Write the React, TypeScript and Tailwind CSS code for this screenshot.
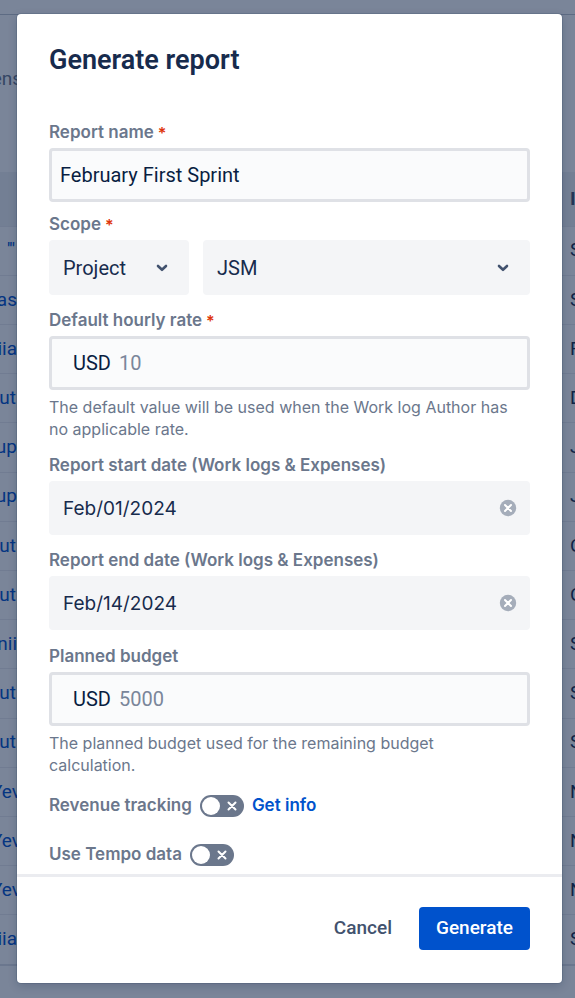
import { useState } from "react";
import type { ReactNode } from "react";

const ROWS = [
  { user: "'''", status: "Started", width: "w-[15px]" },
  { user: "as", status: "Started", width: "w-[17px]" },
  { user: "iia", status: "Finished", width: "w-[17px]" },
  { user: "ut", status: "Done", width: "w-4" },
  { user: "up", status: "Joined", width: "w-[17px]" },
  { user: "up", status: "Joined", width: "w-[17px]" },
  { user: "ut", status: "Open", width: "w-4" },
  { user: "ut", status: "Open", width: "w-4" },
  { user: "nii", status: "Started", width: "w-[17px]" },
  { user: "ut", status: "Started", width: "w-4" },
  { user: "ut", status: "Started", width: "w-4" },
  { user: "Yev", status: "New", width: "w-[21px]" },
  { user: "Yev", status: "New", width: "w-[21px]" },
  { user: "Yev", status: "New", width: "w-[21px]" },
  { user: "iia", status: "Started", width: "w-[17px]" },
];

function PageBehind() {
  return (
    <div aria-hidden="true" className="h-full overflow-hidden bg-white text-[19px] text-[#172b4d]">
      <div className="h-[15px] border-b border-[#c1c7d0]" />
      <div className="flex h-[157px] w-[22px] justify-end pt-[50px] leading-7 text-[#6b778c]">ens</div>
      <table className="h-[794px] w-full table-fixed border-collapse border-b-2 border-[#dfe1e6]">
        <thead>
          <tr className="h-[54px] bg-[#f0f2f5]">
            <th className="w-[570px]" />
            <th className="text-left text-[#42526e]">ID</th>
          </tr>
        </thead>
        <tbody>
          {ROWS.map((row, i) => (
            <tr key={i} className="border-t border-[#ebecf0]">
              <td className="p-0">
                <div className={`flex justify-end text-[#0052cc] ${row.width}`}>{row.user}</div>
              </td>
              <td className="overflow-hidden p-0">{row.status}</td>
            </tr>
          ))}
        </tbody>
      </table>
    </div>
  );
}

interface FieldProps {
  id: string;
  label: string;
  required?: boolean;
  help?: string;
  className?: string;
  children: ReactNode;
}

function Field({ id, label, required, help, className = "mt-[15px]", children }: FieldProps) {
  return (
    <div className={className}>
      <label
        htmlFor={id}
        className="mb-1 flex h-[22px] items-center gap-1 font-[Inter,sans-serif] text-[17px] font-semibold text-[#6b778c]"
      >
        {label}
        {required && <span className="text-[16px] text-[#de350b]">*</span>}
      </label>
      {children}
      {help && (
        <p className="mt-1.5 pr-3 font-[Inter,sans-serif] text-[16px] leading-[22px] text-[#6b778c]">{help}</p>
      )}
    </div>
  );
}

function MoneyInput({ id, placeholder }: { id: string; placeholder: string }) {
  return (
    <div className="flex h-[54px] items-center gap-2 rounded border-[3px] border-[#dfe1e6] bg-[#fafbfc] pl-[21px] text-[20px] text-[#091e42]">
      <span>USD</span>
      <input
        id={id}
        type="text"
        inputMode="decimal"
        placeholder={placeholder}
        className="h-full min-w-0 flex-1 bg-transparent outline-none placeholder:text-[#7a869a]"
      />
    </div>
  );
}

function SelectBox({ id, label, options, className }: {
  id: string;
  label?: string;
  options: string[];
  className: string;
}) {
  return (
    <div className={`relative ${className}`}>
      <select
        id={id}
        aria-label={label}
        className="h-[55px] w-full appearance-none rounded bg-[#f4f5f7] pl-3.5 text-[20px] text-[#172b4d] outline-none"
      >
        {options.map((o) => (
          <option key={o}>{o}</option>
        ))}
      </select>
      <svg
        viewBox="0 0 12 8"
        className="pointer-events-none absolute top-6 right-[21px] h-2 w-3"
        fill="none"
        stroke="#42526e"
        strokeWidth="2.6"
        strokeLinecap="round"
        strokeLinejoin="round"
      >
        <path d="M2 2l4 3.8L10 2" />
      </svg>
    </div>
  );
}

function DateInput({ id, initial }: { id: string; initial: string }) {
  const [value, setValue] = useState(initial);

  return (
    <div className="flex h-[54px] items-center rounded bg-[#f4f5f7] pr-[13px] pl-3.5 font-[Inter,sans-serif] text-[19px] text-[#172b4d]">
      <input
        id={id}
        type="text"
        value={value}
        onChange={(e) => setValue(e.target.value)}
        className="h-full min-w-0 flex-1 bg-transparent outline-none"
      />
      <button type="button" aria-label="Clear" onClick={() => setValue("")}>
        <svg viewBox="0 0 18 18" className="h-[18px] w-[18px]">
          <circle cx="9" cy="9" r="8.2" fill="#a5adba" />
          <path d="M6 6l6 6M12 6l-6 6" stroke="#fff" strokeWidth="2" strokeLinecap="round" />
        </svg>
      </button>
    </div>
  );
}

function Toggle({ id }: { id: string }) {
  return (
    <span className="relative flex">
      <input
        id={id}
        type="checkbox"
        role="switch"
        className="peer h-[22px] w-11 appearance-none rounded-full bg-[#6b778c] checked:bg-[#00875a]"
      />
      <span className="pointer-events-none absolute top-[2px] left-[2px] h-[18px] w-[18px] rounded-full bg-white peer-checked:left-6" />
      <svg
        viewBox="0 0 10 10"
        className="pointer-events-none absolute top-1.5 right-[7px] h-2.5 w-2.5 peer-checked:hidden"
        stroke="#fff"
        strokeWidth="2"
        strokeLinecap="round"
      >
        <path d="M1.5 1.5l7 7M8.5 1.5l-7 7" />
      </svg>
    </span>
  );
}

export default function App() {
  const [name, setName] = useState("February First Sprint");

  return (
    <div className="relative h-screen overflow-hidden font-[Roboto,sans-serif]">
      <PageBehind />
      <div className="absolute inset-0 flex bg-[#091e42]/54 pt-3.5 pr-[13px] pb-[15px] pl-[17px]">
        <div
          role="dialog"
          aria-modal="true"
          aria-labelledby="title"
          className="flex min-w-0 flex-1 flex-col rounded bg-white shadow-[0_0_0_1px_rgba(9,30,66,0.12),0_3px_10px_rgba(9,30,66,0.2)]"
        >
          <h1 id="title" className="px-8 pt-7 text-[27px] leading-9 font-semibold text-[#172b4d]">
            Generate report
          </h1>

          <form className="min-h-0 flex-1 overflow-hidden px-8 pt-11">
            <Field id="name" label="Report name" required className="">
              <input
                id="name"
                type="text"
                value={name}
                onChange={(e) => setName(e.target.value)}
                className="block h-[54px] w-full rounded border-[3px] border-[#dfe1e6] bg-[#fafbfc] px-2 text-[20px] text-[#091e42] outline-none"
              />
            </Field>

            <Field id="scope" label="Scope" required className="mt-3">
              <div className="flex gap-3.5">
                <SelectBox id="scope" options={["Project", "Filter"]} className="w-[140px]" />
                <SelectBox id="project" label="Project" options={["JSM"]} className="flex-1" />
              </div>
            </Field>

            <Field
              id="rate"
              label="Default hourly rate"
              required
              help="The default value will be used when the Work log Author has no applicable rate."
            >
              <MoneyInput id="rate" placeholder="10" />
            </Field>

            <Field id="start" label="Report start date (Work logs & Expenses)">
              <DateInput id="start" initial="Feb/01/2024" />
            </Field>

            <Field id="end" label="Report end date (Work logs & Expenses)">
              <DateInput id="end" initial="Feb/14/2024" />
            </Field>

            <Field
              id="budget"
              label="Planned budget"
              className="mt-4"
              help="The planned budget used for the remaining budget calculation."
            >
              <MoneyInput id="budget" placeholder="5000" />
            </Field>

            <div className="mt-[19px] flex h-[22px] items-center gap-2 font-[Inter,sans-serif] text-[17px] font-semibold text-[#6b778c]">
              <label htmlFor="revenue">Revenue tracking</label>
              <Toggle id="revenue" />
              <a href="#info" className="text-[#0052cc]">Get info</a>
            </div>

            <div className="mt-[27px] flex h-[22px] items-center gap-2 font-[Inter,sans-serif] text-[17px] font-semibold text-[#6b778c]">
              <label htmlFor="tempo">Use Tempo data</label>
              <Toggle id="tempo" />
            </div>
          </form>

          <footer className="flex h-[109px] shrink-0 items-center justify-end gap-2.5 border-t-[3px] border-[#ebecf0] px-8 pb-1 text-[19px] font-medium">
            <button type="button" className="h-[43px] rounded px-[17px] text-[#42526e]">Cancel</button>
            <button type="submit" className="h-[43px] rounded bg-[#0052cc] px-[17px] text-white">Generate</button>
          </footer>
        </div>
      </div>
    </div>
  );
}
